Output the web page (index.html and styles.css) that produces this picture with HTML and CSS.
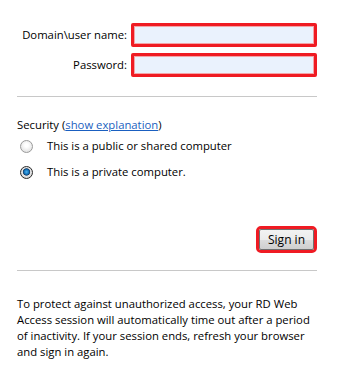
FILE: index.html
```html
<!DOCTYPE html>
<html lang="en">
<head>
    <meta charset="UTF-8">
    <title>RD Web Access</title>
    <link rel="stylesheet" href="styles.css">
</head>
<body>
    <div class="box">
        <div class="login">
            <label for="domain">Domain\user name:</label>
            <input type="text" id="domain" class="field">
            <label for="password">Password:</label>
            <input type="password" id="password" class="field">
        </div>
        <hr>
        <div class="security">
            <p class="title">Security (<a href="#">show explanation</a>)</p>
            <label class="option"><input type="radio" name="pc"> This is a public or shared computer</label>
            <label class="option"><input type="radio" name="pc" checked> This is a private computer.</label>
        </div>
        <div class="actions">
            <span class="ring"><button type="button">Sign in</button></span>
        </div>
        <hr>
        <p class="note">To protect against unauthorized access, your RD Web Access session will automatically time out after a period of inactivity. If your session ends, refresh your browser and sign in again.</p>
    </div>
</body>
</html>
```

FILE: styles.css
```css
body {
    font-family: "Open Sans", "Noto Sans", sans-serif;
    font-size: 11.3px;
    color: #000;
    margin: 0;
    padding: 0;
    background: #fff;
}
.box {
    width: 300px;
    padding: 23px 0 0 17px;
}
.login {
    display: grid;
    grid-template-columns: 110px 186px;
    column-gap: 4px;
    row-gap: 6px;
    align-items: center;
}
.login label {
    text-align: right;
    line-height: 16px;
    white-space: nowrap;
}
.field {
    box-sizing: border-box;
    width: 186px;
    height: 24px;
    margin: 0;
    border: 3px solid #ef1b23;
    border-radius: 2px;
    box-shadow: inset 0 0 0 1px #f3a4a8;
    background: #eaf2fd;
    outline: none;
}
hr {
    border: none;
    border-top: 1px solid #c8c8c8;
    margin: 19px 0 0 0;
}
.security {
    padding-top: 20px;
}
.title {
    margin: 0;
    line-height: 16px;
}
.title a {
    color: #1a5fc0;
}
.option {
    display: flex;
    align-items: center;
    height: 26px;
    line-height: 16px;
}
.option input {
    appearance: none;
    width: 13px;
    height: 13px;
    margin: 0 14px 0 3px;
    border-radius: 50%;
    border: 1px solid #9a9a9a;
    background: radial-gradient(circle at 50% 40%, #ffffff 20%, #dcdcdc 90%);
}
.option input:checked {
    border-color: #2a2a2a;
    background: radial-gradient(circle at 50% 45%, #4fb3f0 0, #0d6fb8 30%, #1c3f66 40%, #e8e8e8 50%, #bdbdbd 100%);
}
.actions {
    display: flex;
    justify-content: flex-end;
    padding-top: 41px;
}
.ring {
    display: inline-block;
    border: 3px solid #ef1b23;
    border-radius: 5px;
}
button {
    display: block;
    width: 55px;
    height: 21px;
    padding: 0;
    font-family: "Open Sans", "Noto Sans", sans-serif;
    font-size: 12px;
    color: #000;
    border: 1px solid #707070;
    border-radius: 2px;
    background: linear-gradient(#f2f2f2, #ebebeb 50%, #dddddd 51%, #cfcfcf);
    cursor: pointer;
}
.actions + hr {
    margin-top: 17px;
}
.note {
    margin: 25px 0 0 0;
    line-height: 16px;
}
```
